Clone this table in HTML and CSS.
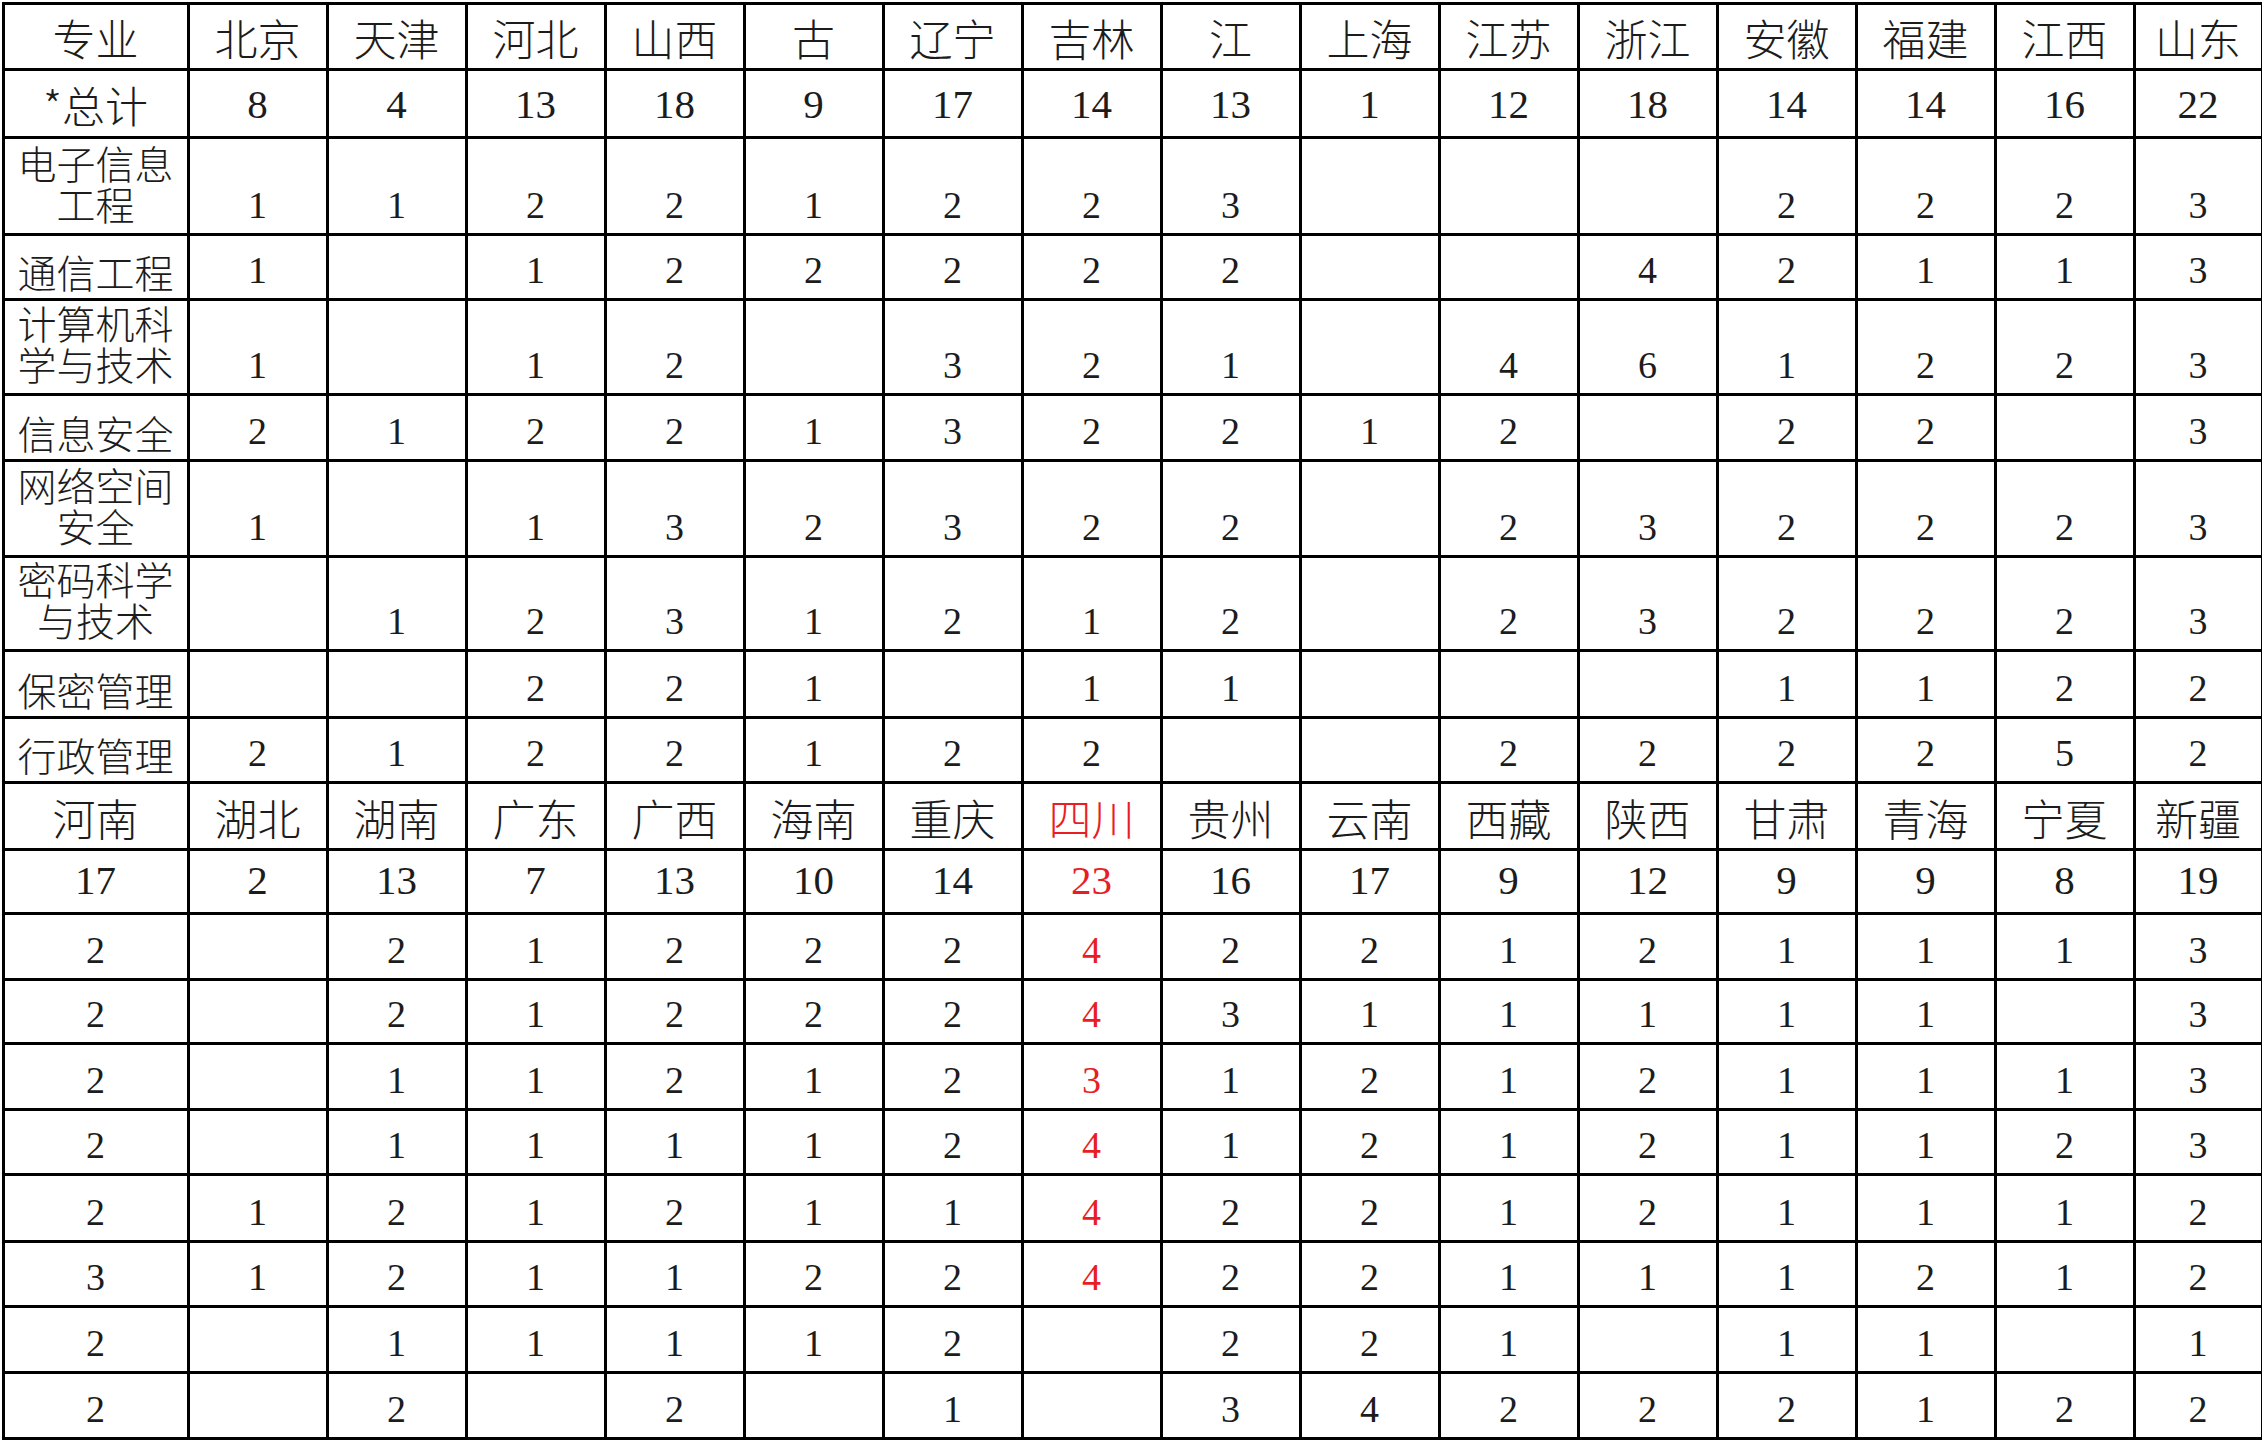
FILE: index.html
```html
<!DOCTYPE html>
<html lang="zh-CN">
<head>
<meta charset="utf-8">
<title>招生计划</title>
<link rel="stylesheet" href="styles.css">
</head>
<body>
<div class="sheet">
<table class="quota">
<colgroup>
<col class="c-first">
<col class="c-mid"><col class="c-mid"><col class="c-mid"><col class="c-mid"><col class="c-mid"><col class="c-mid"><col class="c-mid">
<col class="c-mid"><col class="c-mid"><col class="c-mid"><col class="c-mid"><col class="c-mid"><col class="c-mid"><col class="c-mid">
<col class="c-last">
</colgroup>
<tr class="head h66">
<td>专业</td><td>北京</td><td>天津</td><td>河北</td><td>山西</td><td>古</td><td>辽宁</td><td>吉林</td><td>江</td><td>上海</td><td>江苏</td><td>浙江</td><td>安徽</td><td>福建</td><td>江西</td><td>山东</td>
</tr>
<tr class="total h68">
<td class="label">*总计</td><td>8</td><td>4</td><td>13</td><td>18</td><td>9</td><td>17</td><td>14</td><td>13</td><td>1</td><td>12</td><td>18</td><td>14</td><td>14</td><td>16</td><td>22</td>
</tr>
<tr class="body h97">
<td class="major wrap">电子信息工程</td><td>1</td><td>1</td><td>2</td><td>2</td><td>1</td><td>2</td><td>2</td><td>3</td><td></td><td></td><td></td><td>2</td><td>2</td><td>2</td><td>3</td>
</tr>
<tr class="body h65">
<td class="major">通信工程</td><td>1</td><td></td><td>1</td><td>2</td><td>2</td><td>2</td><td>2</td><td>2</td><td></td><td></td><td>4</td><td>2</td><td>1</td><td>1</td><td>3</td>
</tr>
<tr class="body h95">
<td class="major wrap">计算机科学与技术</td><td>1</td><td></td><td>1</td><td>2</td><td></td><td>3</td><td>2</td><td>1</td><td></td><td>4</td><td>6</td><td>1</td><td>2</td><td>2</td><td>3</td>
</tr>
<tr class="body h66">
<td class="major">信息安全</td><td>2</td><td>1</td><td>2</td><td>2</td><td>1</td><td>3</td><td>2</td><td>2</td><td>1</td><td>2</td><td></td><td>2</td><td>2</td><td></td><td>3</td>
</tr>
<tr class="body h96">
<td class="major wrap">网络空间安全</td><td>1</td><td></td><td>1</td><td>3</td><td>2</td><td>3</td><td>2</td><td>2</td><td></td><td>2</td><td>3</td><td>2</td><td>2</td><td>2</td><td>3</td>
</tr>
<tr class="body h94">
<td class="major wrap">密码科学与技术</td><td></td><td>1</td><td>2</td><td>3</td><td>1</td><td>2</td><td>1</td><td>2</td><td></td><td>2</td><td>3</td><td>2</td><td>2</td><td>2</td><td>3</td>
</tr>
<tr class="body h67">
<td class="major">保密管理</td><td></td><td></td><td>2</td><td>2</td><td>1</td><td></td><td>1</td><td>1</td><td></td><td></td><td></td><td>1</td><td>1</td><td>2</td><td>2</td>
</tr>
<tr class="body h65">
<td class="major">行政管理</td><td>2</td><td>1</td><td>2</td><td>2</td><td>1</td><td>2</td><td>2</td><td></td><td></td><td>2</td><td>2</td><td>2</td><td>2</td><td>5</td><td>2</td>
</tr>
<tr class="head h67">
<td>河南</td><td>湖北</td><td>湖南</td><td>广东</td><td>广西</td><td>海南</td><td>重庆</td><td class="hl">四川</td><td>贵州</td><td>云南</td><td>西藏</td><td>陕西</td><td>甘肃</td><td>青海</td><td>宁夏</td><td>新疆</td>
</tr>
<tr class="total h64">
<td>17</td><td>2</td><td>13</td><td>7</td><td>13</td><td>10</td><td>14</td><td class="hl">23</td><td>16</td><td>17</td><td>9</td><td>12</td><td>9</td><td>9</td><td>8</td><td>19</td>
</tr>
<tr class="body h66">
<td>2</td><td></td><td>2</td><td>1</td><td>2</td><td>2</td><td>2</td><td class="hl">4</td><td>2</td><td>2</td><td>1</td><td>2</td><td>1</td><td>1</td><td>1</td><td>3</td>
</tr>
<tr class="body h64">
<td>2</td><td></td><td>2</td><td>1</td><td>2</td><td>2</td><td>2</td><td class="hl">4</td><td>3</td><td>1</td><td>1</td><td>1</td><td>1</td><td>1</td><td></td><td>3</td>
</tr>
<tr class="body h66">
<td>2</td><td></td><td>1</td><td>1</td><td>2</td><td>1</td><td>2</td><td class="hl">3</td><td>1</td><td>2</td><td>1</td><td>2</td><td>1</td><td>1</td><td>1</td><td>3</td>
</tr>
<tr class="body h65">
<td>2</td><td></td><td>1</td><td>1</td><td>1</td><td>1</td><td>2</td><td class="hl">4</td><td>1</td><td>2</td><td>1</td><td>2</td><td>1</td><td>1</td><td>2</td><td>3</td>
</tr>
<tr class="body h67">
<td>2</td><td>1</td><td>2</td><td>1</td><td>2</td><td>1</td><td>1</td><td class="hl">4</td><td>2</td><td>2</td><td>1</td><td>2</td><td>1</td><td>1</td><td>1</td><td>2</td>
</tr>
<tr class="body h65">
<td>3</td><td>1</td><td>2</td><td>1</td><td>1</td><td>2</td><td>2</td><td class="hl">4</td><td>2</td><td>2</td><td>1</td><td>1</td><td>1</td><td>2</td><td>1</td><td>2</td>
</tr>
<tr class="body h66">
<td>2</td><td></td><td>1</td><td>1</td><td>1</td><td>1</td><td>2</td><td class="hl"></td><td>2</td><td>2</td><td>1</td><td></td><td>1</td><td>1</td><td></td><td>1</td>
</tr>
<tr class="body h66">
<td>2</td><td></td><td>2</td><td></td><td>2</td><td></td><td>1</td><td class="hl"></td><td>3</td><td>4</td><td>2</td><td>2</td><td>2</td><td>1</td><td>2</td><td>2</td>
</tr>
</table>
</div>
</body>
</html>
```

FILE: styles.css
```css
html, body {
  margin: 0;
  padding: 0;
  background: #ffffff;
}

.sheet {
  padding: 1.5px 0 0 1.5px;
}

.quota {
  border-collapse: collapse;
  table-layout: fixed;
  width: 2259px;
  font-family: "Liberation Serif", "Noto Sans CJK SC", serif;
  color: #1c1c1c;
}

.c-first { width: 185px; }
.c-mid { width: 139px; }
.c-last { width: 128px; }

.quota td {
  border: 3px solid #000;
  padding: 0 2px;
  text-align: center;
  vertical-align: bottom;
  white-space: normal;
}

/* header rows: province names */
.head td {
  font-family: "Noto Sans CJK SC", "Liberation Serif", sans-serif;
  font-weight: 300;
  font-size: 43px;
  line-height: 46px;
  padding-bottom: 8px;
}

/* totals rows */
.total td {
  font-size: 41px;
  line-height: 45px;
  padding-bottom: 9px;
}

.total td.label {
  font-family: "Noto Sans CJK SC", sans-serif;
  font-weight: 300;
  font-size: 43px;
  line-height: 46px;
  padding-bottom: 9px;
}

/* data rows */
.body td {
  font-size: 38px;
  line-height: 42px;
  padding-bottom: 7px;
}

.body td.major {
  font-family: "Noto Sans CJK SC", sans-serif;
  font-weight: 300;
  font-size: 39px;
  line-height: 43px;
  padding-bottom: 5px;
}

.body td.wrap {
  line-height: 41px;
  padding-bottom: 9px;
}

.quota td.hl {
  color: #e81e25;
}

.h64 { height: 64px; }
.h65 { height: 65px; }
.h66 { height: 66px; }
.h67 { height: 67px; }
.h68 { height: 68px; }
.h94 { height: 94px; }
.h95 { height: 95px; }
.h96 { height: 96px; }
.h97 { height: 97px; }
```
